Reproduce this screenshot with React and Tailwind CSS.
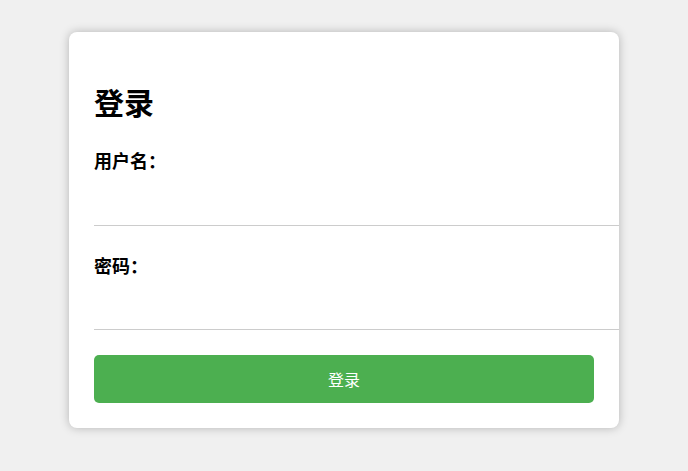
import React from 'react'

export default function App() {
	return (
		<div
			className="flex min-h-screen w-full justify-center bg-[#f0f0f0] pt-[32px]"
			style={{ fontFamily: '"Noto Sans CJK SC", "Noto Sans", sans-serif' }}
		>
			<div className="h-fit w-[550px] overflow-hidden rounded-lg bg-white px-[25px] pb-[25px] pt-[25px] shadow-[0_0_10px_rgba(0,0,0,0.25)]">
				<h2 className="mt-[26px] text-[30px] font-bold leading-[36px] text-black">登录</h2>
				<form className="flex flex-col" onSubmit={e => e.preventDefault()}>
					<label className="mt-[29px] text-[18px] font-bold leading-[24px] text-black">用户名：</label>
					<input
						type="text"
						className="h-[54px] w-[525px] border-b border-[#cccccc] outline-none"
					/>
					<label className="mt-[27px] text-[18px] font-bold leading-[24px] text-black">密码：</label>
					<input
						type="password"
						className="h-[53px] w-[525px] border-b border-[#cccccc] outline-none"
					/>
					<button
						type="submit"
						className="mt-[25px] h-[48px] w-full rounded-[5px] bg-[#4caf50] text-[16px] text-white"
					>
						登录
					</button>
				</form>
			</div>
		</div>
	)
}
